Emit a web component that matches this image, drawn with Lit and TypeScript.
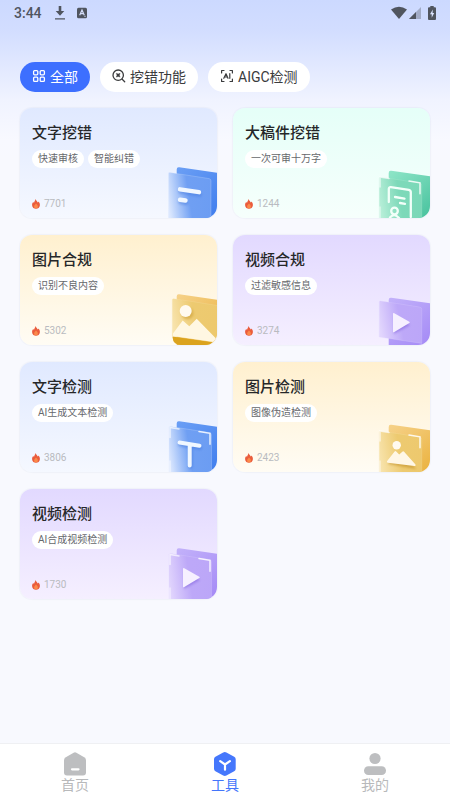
import { LitElement, html, svg, css, type TemplateResult } from "lit";
import { customElement, property, state } from "lit/decorators.js";
import { classMap } from "lit/directives/class-map.js";

type Tone = "blue" | "green" | "yellow" | "purple";
type Art = "text" | "document" | "picture" | "video" | "scan-text" | "scan-picture" | "scan-video";

interface Tool {
  title: string;
  tags: string[];
  uses: number;
  tone: Tone;
  art: Art;
}

const TOOLS: Tool[] = [
  { title: "文字挖错", tags: ["快速审核", "智能纠错"], uses: 7701, tone: "blue", art: "text" },
  { title: "大稿件挖错", tags: ["一次可审十万字"], uses: 1244, tone: "green", art: "document" },
  { title: "图片合规", tags: ["识别不良内容"], uses: 5302, tone: "yellow", art: "picture" },
  { title: "视频合规", tags: ["过滤敏感信息"], uses: 3274, tone: "purple", art: "video" },
  { title: "文字检测", tags: ["AI生成文本检测"], uses: 3806, tone: "blue", art: "scan-text" },
  { title: "图片检测", tags: ["图像伪造检测"], uses: 2423, tone: "yellow", art: "scan-picture" },
  { title: "视频检测", tags: ["AI合成视频检测"], uses: 1730, tone: "purple", art: "scan-video" },
];

/* back sheet start/end, front sheet start/end */
const INK: Record<Tone, string[]> = {
  blue: ["#6b9ff5", "#4380ee", "#dce8fe", "#6f9ff3"],
  green: ["#8fe6c8", "#4cc4a0", "#b9efd9", "#7dd9b9"],
  yellow: ["#f6d28a", "#ebb443", "#f8e4ae", "#edca70"],
  purple: ["#c3b2fa", "#a68cf6", "#e2d6fd", "#bda8f8"],
};

const ICON = {
  grid: svg`<g fill="none" stroke="currentColor" stroke-width="1.3">
    <rect x="1.6" y="1.6" width="4.2" height="4.2" rx="1"/><rect x="8.2" y="1.6" width="4.2" height="4.2" rx="1"/>
    <rect x="1.6" y="8.2" width="4.2" height="4.2" rx="1"/><rect x="8.2" y="8.2" width="4.2" height="4.2" rx="1"/></g>`,
  search: svg`<g fill="none" stroke="currentColor" stroke-width="1.3" stroke-linecap="round">
    <circle cx="6.2" cy="6.200" r="5.200"/><path d="M10.200 10.200l2.500 2.500"/></g>
    <path d="M4.300 4.300l1.900.7 1.900-.7-.7 1.900.7 1.900-1.900-.7-1.900.7.7-1.900z" fill="currentColor" stroke="currentColor" stroke-width=".4"/>`,
  scan: svg`<g fill="none" stroke="currentColor" stroke-width="1.200" stroke-linecap="round" stroke-linejoin="round">
    <path d="M4 1.500H1.600V4M10 1.500h2.400V4M4 12.500H1.600V10M10 12.500h2.400V10"/>
    <path d="M3.800 9.300L6 4.700l2 4.600M4.800 8h2.400M9.800 4.700v4.600"/></g>`,
};

const play = (x: number, y: number) => svg`
  <path d="M${x + 1} ${y + 3}v18l16-9z" fill="#7453d8" opacity=".45" filter="url(#soft)"/>
  <path d="M${x} ${y + 1}q0-1.400 1.300-.7l15 8.400q1 .7 0 1.400l-15 9q-1.300.7-1.300-.7z" fill="#f6f0ff"/>`;

const brackets = (x: number, y: number) => svg`
  <g fill="none" stroke="#fff" stroke-width="1.500" stroke-linecap="round" opacity=".85">
    <path d="M${x + 30} ${y + 5}l11 1.800v11"/>
    <path d="M${x + 1} ${y + 11}V${y + 1}l9 1.400" opacity=".8"/>
    <path d="M${x + 1} 45v11" opacity=".6"/>
  </g>`;

const MOTIF: Record<Art, TemplateResult> = {
  text: svg`<g stroke-width="4.400" stroke-linecap="round">
      <path d="M15.500 29.500l19 3.200M15.500 40l5.500.9" stroke="#3c73dc" opacity=".4" filter="url(#soft)"/>
      <path d="M15 27.300l19 2.900M15 37.700l5.500.8" stroke="#f0f7ff"/></g>`,
  document: svg`${brackets(1, 14)}
    <g fill="none" stroke="#f2fff9" stroke-width="2.300" stroke-linecap="round" stroke-linejoin="round">
      <path d="M10.800 40V27q0-2 2-1.800l18 2.700q2 .4 2 2.400V55"/>
      <path d="M17 35l9.500 1.600M22 41l5 .8"/>
      <circle cx="16.500" cy="49" r="3.300"/><path d="M12 55.500q4-5 9 .5"/></g>`,
  picture: svg`<path d="M7.500 47.500L52 54v2H16q-8 0-8.500-8z" fill="#dba31f"/>
    <circle cx="22.500" cy="24.500" r="6" fill="#bf8a16" opacity=".4" filter="url(#soft)"/>
    <circle cx="20.700" cy="22" r="6" fill="#fffaf0"/>
    <path d="M8 44.500L17.700 31.500 24.300 37.300 31.700 29.700 52 50.500V53.500L8 47z" fill="#fff7e2"/>`,
  video: svg`${play(15, 24)}`,
  "scan-text": svg`${brackets(4, 10.5)}
    <g fill="none" stroke-width="4" stroke-linecap="round" stroke-linejoin="round">
      <path d="M15 28.500l20 3.200M25.500 31v20" stroke="#3c73dc" opacity=".45" filter="url(#soft)"/>
      <path d="M14.500 26.500l20 3.200M24.700 28.500v21" stroke="#f0f7ff"/></g>`,
  "scan-picture": svg`${brackets(1, 14)}
    <path d="M10 48l8-10 4 3 4-3 12 15z" fill="#b98516" opacity=".5" filter="url(#soft)"/>
    <circle cx="18.700" cy="29.300" r="4.200" fill="#fffaf0"/>
    <path d="M9 45.300L16.600 35.500q.8-.8 1.600 0L21.200 38.500 24.600 35.500q.8-.6 1.500.2L37.500 48.500q.5 1.800-1 1.500L9.800 46.700q-1.200-.3-.8-1.400z" fill="#fff7e6"/>`,
  "scan-video": svg`${brackets(4, 10.5)}${play(18, 25)}`,
};

/* Left and top of the front sheet, then of the back sheet */
const SHEET: Record<Art, number[]> = {
  text: [3.5, 10.5, 11.7, 5],
  document: [1.3, 15, 10.7, 8.5],
  picture: [7.3, 9.7, 11.7, 5],
  video: [1.3, 12, 10.7, 8.5],
  "scan-text": [4, 10.5, 11.7, 5],
  "scan-picture": [1.3, 15, 10.7, 8.5],
  "scan-video": [4, 10.5, 11.7, 5],
};

@customElement("tool-card")
export class ToolCard extends LitElement {
  @property({ attribute: false }) tool!: Tool;

  static styles = css`
    :host { display: block; }
    .card {
      position: relative; box-sizing: border-box; display: flex; flex-direction: column;
      min-height: 110px; padding: 13px 12px 7px; border-radius: 12px; overflow: hidden;
      box-shadow: 0 0 1px 1px rgba(60, 80, 140, 0.04);
      color: #262729; text-decoration: none;
    }
    .blue { background: linear-gradient(#e0e9ff, #f5f8ff); }
    .green { background: linear-gradient(#e5fff8, #f6fffc); }
    .yellow { background: linear-gradient(#fff0cf, #fffcf4); }
    .purple { background: linear-gradient(#e2d9ff, #f5efff); }
    .title { margin: 0; font-size: 15px; line-height: 24px; font-weight: 500; }
    .tags { display: flex; gap: 4px; margin-top: 5px; }
    .tag {
      padding: 0 6px; border-radius: 9px; background: #fff; color: #66686c;
      font-size: 10px; line-height: 18px; white-space: nowrap;
    }
    .uses {
      display: flex; align-items: center; gap: 4px; margin-top: auto;
      font-size: 10px; line-height: 14px; color: #b9bbc0;
    }
    .flame { width: 8px; height: 10px; }
    .art { position: absolute; right: 0; bottom: 0; width: 52px; height: 56px; }
  `;

  render() {
    const { title, tags, uses, tone, art } = this.tool;
    const [b1, b2, f1, f2] = INK[tone];
    const [fx, fy, bx, by] = SHEET[art];
    const right = art === "picture" ? 54 : fx + 42.5;
    const top = fy + (right - fx) * 0.15;
    const floor = art === "video" ? 48 : art === "picture" ? 47 : 60;
    return html`
      <a class="card ${tone}" href="#tool">
        <h2 class="title">${title}</h2>
        <div class="tags">${tags.map((t) => html`<span class="tag">${t}</span>`)}</div>
        <div class="uses">
          <svg class="flame" viewBox="0 0 8 10" aria-hidden="true">
            <path d="M3.700 0C4.200 1.800 5.300 2.300 5.800 3.400 6.300 3.300 6.500 3 6.600 2.600 7.500 3.800 8 5 7.900 6.200 7.700 8.500 6 9.800 4 9.800S.2 8.500.1 6.200C0 4.600.7 3.800 1.300 3.100 1.500 3.600 1.700 3.800 2 3.900 2.200 2.500 3.300 1.600 3.700 0z" fill="#ea5c3c"/>
            <path d="M4 4.600C5.100 5.800 6 6.500 5.900 7.700 5.700 8.900 5 9.300 4 9.300S2.200 8.800 2.100 7.700C2 6.500 3.200 5.900 4 4.600z" fill="#fb8a4a"/>
          </svg>
          <span>${uses}</span>
        </div>
        <svg class="art" viewBox="0 0 52 56" aria-hidden="true">
          <defs>
            <linearGradient id="back" x1="0" y1="0" x2=".7" y2="1"><stop offset="0" stop-color=${b1}/><stop offset="1" stop-color=${b2}/></linearGradient>
            <linearGradient id="front" x1="0" y1=".6" x2="1" y2=".4"><stop offset="0" stop-color=${f1}/><stop offset=".5" stop-color=${f2}/><stop offset="1" stop-color=${f2} stop-opacity=".9"/></linearGradient>
            <filter id="soft" x="-40%" y="-40%" width="180%" height="180%"><feGaussianBlur stdDeviation="1.200"/></filter>
          </defs>
          <path d="M${bx} ${by + 2.5}q0-2.600 2.600-2.200L54 ${by + 6}V60H${bx}z" fill="url(#back)"/>
          <path d="M${fx} ${fy + 1.2}q0-1.400 1.400-1.200L${right - 2} ${top - 0.3}q2 .3 2 2.300V${floor + (right - fx) * 0.15}L${fx} ${floor}z"
            fill="url(#front)" stroke=${f1} stroke-opacity=".4" stroke-width=".6"/>
          ${MOTIF[art]}
        </svg>
      </a>`;
  }
}

@customElement("app-root")
export class AppRoot extends LitElement {
  @state() private filter = 0;

  private filters = [
    { label: "全部", icon: ICON.grid },
    { label: "挖错功能", icon: ICON.search },
    { label: "AIGC检测", icon: ICON.scan },
  ];

  static styles = css`
    :host {
      display: flex; flex-direction: column; min-height: 100vh;
      font-family: Roboto, "Noto Sans CJK SC", sans-serif;
      background: #f8f9fe linear-gradient(#ccd9ff 0, #d2ddff 30px, #f0f3ff 100px, #f8f9ff 140px, #f8f9fe 160px);
    }
    .status { display: flex; align-items: center; padding: 2px 14px 0; height: 22px; color: #50555f; }
    .clock { font-size: 14px; font-weight: 500; line-height: 16px; margin-right: 12px; }
    .status svg { display: block; }
    .spacer { flex: 1; }
    .download { width: 12px; height: 14px; margin-right: 11px; }
    .letter { width: 10px; height: 12px; }
    .wifi { width: 16px; height: 14px; margin-right: 2px; }
    .signal { width: 12px; height: 12px; margin-right: 7px; }
    .battery { width: 8px; height: 14px; }
    .filters { display: flex; gap: 10px; padding: 38px 20px 16px; }
    .chip {
      display: flex; align-items: center; gap: 4px; height: 30px; padding: 0 12px 2px; border: 0;
      border-radius: 15px; background: #fff; color: #3a3b3d; font: inherit; font-size: 14px; white-space: nowrap;
    }
    .chip svg { width: 14px; height: 14px; }
    .active { background: #3d6fff; color: #fff; }
    .tools { display: grid; grid-template-columns: 1fr 1fr; gap: 17px 16px; padding: 0 20px 16px; }
    .tabs {
      display: grid; grid-template-columns: repeat(3, 1fr); margin-top: auto; padding: 8px 0 6px;
      border-top: 1px solid #eff0f3; background: #fff;
    }
    .tab {
      display: flex; flex-direction: column; align-items: center; color: #b8b9bb;
      font-size: 14px; line-height: 18px; text-decoration: none;
    }
    .tab svg { width: 24px; height: 24px; }
    .current { color: #4476fb; }
  `;

  render() {
    return html`
      <header class="status">
        <span class="clock">3:44</span>
        <svg class="download" viewBox="0 0 12 14"><path d="M4.700 0h2.600v5h3L6 9.700 1.700 5h3zM1 12.200h10v1.300H1z" fill="currentColor"/></svg>
        <svg class="letter" viewBox="0 0 10 12"><rect y=".8" width="10" height="10.400" rx="1.500" fill="currentColor"/><path d="M2.700 8.200L5 3l2.300 5.200M3.500 6.600h3M7.500 9.300h1" fill="none" stroke="#d6dffb" stroke-width="1.200"/></svg>
        <span class="spacer"></span>
        <svg class="wifi" viewBox="0 0 16 14"><path d="M0 3.500Q8-2 16 3.500L8 13z" fill="currentColor"/></svg>
        <svg class="signal" viewBox="0 0 12 12"><path d="M12 0v12H0z" fill="currentColor" opacity=".35"/><path d="M7 5v7H0z" fill="currentColor"/></svg>
        <svg class="battery" viewBox="0 0 8 14"><path d="M2.300 0h3.400v1.300H7q1 0 1 1V13q0 1-1 1H1q-1 0-1-1V2.300q0-1 1-1h1.300z" fill="currentColor"/><path d="M4.800 3.600L2 8.200h1.700v3.600L6.200 7H4.600z" fill="#dbe4ff"/></svg>
      </header>
      <div class="filters">
        ${this.filters.map((f, i) => html`
          <button class=${classMap({ chip: true, active: i === this.filter })} @click=${() => (this.filter = i)}>
            <svg viewBox="0 0 14 14" aria-hidden="true">${f.icon}</svg><span>${f.label}</span>
          </button>`)}
      </div>
      <main class="tools">${TOOLS.map((t) => html`<tool-card .tool=${t}></tool-card>`)}</main>
      <nav class="tabs">
        <a class="tab" href="#home">
          <svg viewBox="0 0 24 24" aria-hidden="true"><path d="M10.600.7q1.400-.8 2.800 0l7.800 4.500Q23 6.300 23 8.300V20.500q0 3-3 3H4q-3 0-3-3V8.300q0-2 1.800-3.100z" fill="#bdbec0"/><path d="M9 17.300h6.500" stroke="#fff" stroke-width="2.200" stroke-linecap="round"/></svg>
          首页
        </a>
        <a class="tab current" href="#tools" aria-current="page">
          <svg viewBox="0 0 24 24" aria-hidden="true"><path d="M10.200.5q1.600-.8 3.200 0l7.800 4.200q1.500.8 1.500 2.600v9.400q0 1.800-1.500 2.600l-7.800 4.200q-1.600.8-3.200 0l-7.800-4.200Q1 18.500 1 16.700V7.300q0-1.800 1.400-2.600z" fill="#4577fc"/><path d="M7.200 9.200l4.800 3.300 4.900-3.300M12 12.500v5.200" fill="none" stroke="#fff" stroke-width="2.200" stroke-linecap="round" stroke-linejoin="round"/></svg>
          工具
        </a>
        <a class="tab" href="#me">
          <svg viewBox="0 0 24 24" aria-hidden="true"><circle cx="12" cy="6.500" r="5.600" fill="#bdbec0"/><rect x="1" y="14.300" width="22" height="8.700" rx="4.300" fill="#bdbec0"/></svg>
          我的
        </a>
      </nav>`;
  }
}
